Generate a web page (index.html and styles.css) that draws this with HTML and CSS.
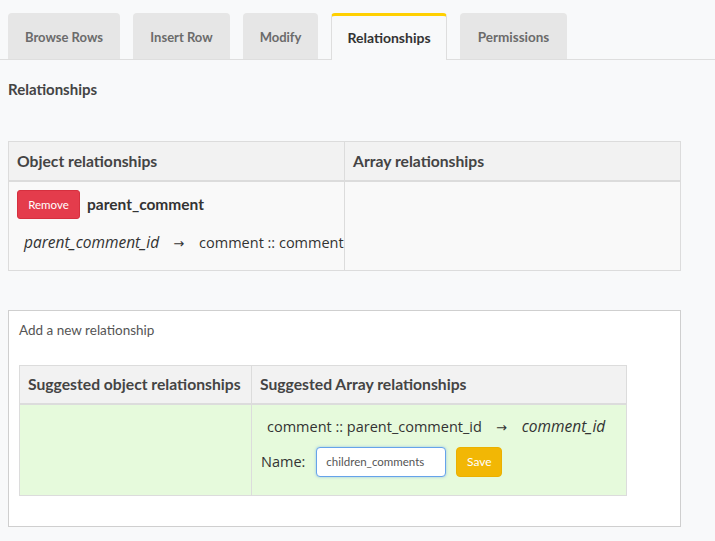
FILE: index.html
```html
<!DOCTYPE html>
<html>
<head>
<meta charset="utf-8">
<link rel="stylesheet" href="styles.css">
</head>
<body>
<div class="tabs">
  <div class="tab t-browse">Browse Rows</div>
  <div class="tab t-insert">Insert Row</div>
  <div class="tab t-modify">Modify</div>
  <div class="tab t-rel active">Relationships</div>
  <div class="tab t-perm">Permissions</div>
</div>
<div class="content">
  <h4 class="title">Relationships</h4>
  <table class="rel-table existing">
    <colgroup><col class="c1"><col></colgroup>
    <thead>
      <tr><th>Object relationships</th><th>Array relationships</th></tr>
    </thead>
    <tbody>
      <tr>
        <td>
          <div class="rel-name"><button class="btn-remove">Remove</button><b>parent_comment</b></div>
          <div class="rel-map"><i>parent_comment_id</i><span class="arrow">→</span>comment :: comment</div>
        </td>
        <td></td>
      </tr>
    </tbody>
  </table>
  <div class="add-box">
    <div class="add-title">Add a new relationship</div>
    <table class="rel-table suggested">
      <colgroup><col class="c2"><col></colgroup>
      <thead>
        <tr><th>Suggested object relationships</th><th>Suggested Array relationships</th></tr>
      </thead>
      <tbody>
        <tr>
          <td></td>
          <td>
            <div class="sug-map">comment :: parent_comment_id<span class="arrow">→</span><i>comment_id</i></div>
            <div class="name-row">
              <label>Name:</label>
              <input class="name-input" type="text" value="children_comments">
              <button class="btn-save">Save</button>
            </div>
          </td>
        </tr>
      </tbody>
    </table>
  </div>
</div>
</body>
</html>
```

FILE: styles.css
```css
html, body {
  margin: 0;
  padding: 0;
  background: #f8f9fa;
  font-family: "Open Sans", sans-serif;
  color: #333;
}

.tabs {
  display: flex;
  gap: 13px;
  padding: 13px 8px 0;
  border-bottom: 1px solid #dedede;
}

.tab {
  height: 46px;
  line-height: 48px;
  text-align: center;
  background: #e6e6e6;
  border-radius: 4px 4px 0 0;
  font-family: "Lato", sans-serif;
  font-weight: 700;
  font-size: 13px;
  color: #6b6b6b;
  box-sizing: border-box;
}

.t-browse { width: 112px; }
.t-insert { width: 97px; }
.t-modify { width: 75px; }
.t-rel { width: 116px; }
.t-perm { width: 107px; font-size: 13.5px; }

.tab.active {
  background: #f8f9fa;
  color: #333;
  border: 1px solid #dedede;
  border-top: 3px solid #ffd000;
  border-bottom: none;
  height: 47px;
  margin-bottom: -1px;
  line-height: 44px;
  font-size: 14px;
}

.content {
  padding: 0 8px;
}

.title {
  margin: 19px 0 0;
  font-family: "Lato", sans-serif;
  font-size: 15px;
  font-weight: 700;
  line-height: 20px;
  color: #444;
}

.rel-table {
  border-collapse: collapse;
  table-layout: fixed;
  border: 1px solid #dcdcdc;
}

.rel-table th {
  background: #f2f2f2;
  text-align: left;
  font-family: "Lato", sans-serif;
  font-weight: 700;
  font-size: 15.7px;
  color: #444;
  height: 39px;
  padding: 0 8px;
  border: 1px solid #dcdcdc;
  border-bottom: 2px solid #dcdcdc;
  box-sizing: border-box;
  white-space: nowrap;
}

.rel-table td {
  vertical-align: top;
  border: 1px solid #dcdcdc;
  padding: 8px;
  overflow: hidden;
  white-space: nowrap;
}

.existing {
  width: 673px;
  margin-top: 42px;
}

.existing .c1 { width: 336px; }

.existing td {
  background: #f9f9f9;
  height: 90px;
  box-sizing: border-box;
}

.rel-name {
  display: flex;
  align-items: center;
  gap: 7px;
  font-family: "Lato", sans-serif;
  font-size: 15.5px;
  color: #333;
}

.btn-remove {
  width: 63px;
  height: 29px;
  background: #e43c4c;
  color: #fff;
  border: 1px solid #d6303f;
  border-radius: 3px;
  font-family: "Lato", sans-serif;
  font-size: 11.5px;
  padding: 0;
}

.rel-map {
  margin-top: 13px;
  padding-left: 7px;
  font-size: 14.5px;
  color: #333;
  line-height: 20px;
}

.rel-map i, .sug-map i {
  font-size: 15.5px;
}

.arrow {
  display: inline-block;
  margin: 0 15px 0 14px;
  font-family: "DejaVu Sans", sans-serif;
  font-size: 13px;
}

.add-box {
  margin-top: 39px;
  width: 673px;
  box-sizing: border-box;
  background: #fff;
  border: 1px solid #cfcfcf;
  padding: 10px 10px 30px;
}

.add-title {
  font-family: "Lato", sans-serif;
  font-size: 13.5px;
  color: #555;
  line-height: 18px;
}

.suggested {
  margin-top: 26px;
  width: 608px;
}

.suggested .c2 { width: 232px; }

.suggested th {
  height: 38px;
}

.suggested td {
  background: #e6fadc;
  height: 92px;
  box-sizing: border-box;
  padding: 11px 9px 8px;
}

.sug-map {
  padding-left: 6px;
  font-size: 14.5px;
  line-height: 20px;
}

.name-row {
  display: flex;
  align-items: center;
  margin-top: 9px;
  font-size: 14.5px;
}

.name-row label {
  margin-right: 11px;
}

.name-input {
  width: 130px;
  height: 30px;
  box-sizing: border-box;
  border: 1px solid #66a3ea;
  border-radius: 4px;
  box-shadow: 0 0 3px rgba(102, 163, 234, 0.6);
  font-family: "Lato", sans-serif;
  font-size: 11.5px;
  color: #555;
  padding: 0 9px;
  margin-right: 10px;
  outline: none;
}

.btn-save {
  width: 46px;
  height: 30px;
  background: #f2b705;
  border: 1px solid #ebb000;
  border-radius: 4px;
  color: #fff;
  font-family: "Lato", sans-serif;
  font-size: 12px;
  padding: 0;
}
```
